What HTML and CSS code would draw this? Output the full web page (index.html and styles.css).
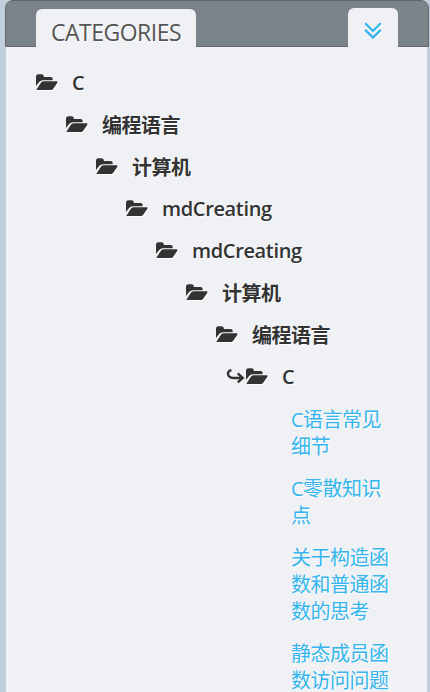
FILE: index.html
```html
<!DOCTYPE html>
<html lang="zh-CN">
<head>
<meta charset="utf-8">
<title>Categories</title>
<link rel="stylesheet" href="styles.css">
</head>
<body>
<svg class="defs" aria-hidden="true">
  <symbol id="folder" viewBox="0 0 22 17"><path d="M0 13.5V2.6C0 1.2.9.2 2.3.2H5.6C7 .2 7.9 1.2 7.9 2.6V3h6.6c1.4 0 2.2.8 2.2 2.2V6.2H7.2C5.5 6.2 4.1 6.9 3 8.2L0 12Z"/><path d="M.6 15.4 4.4 9.4C5.3 8 6.3 7.3 7.7 7.3H20.3c1.1 0 1.5.7.9 1.6L17.4 14.4c-.7 1.1-1.7 1.7-3 1.7H1.3c-.8 0-1-.2-.7-.7Z"/></symbol>
</svg>
<section class="panel">
  <header class="bar">
    <h2 class="title">CATEGORIES</h2>
    <a class="toggle"><svg width="18" height="18" viewBox="0 0 18 18"><path d="M1.2 1.3 9 9l7.8-7.7M1.2 7.9 9 15.6l7.8-7.7"/></svg></a>
  </header>
  <div class="tree">
    <div class="row"><svg class="folder"><use href="#folder"/></svg><span class="latin">C</span></div>
    <div class="level">
      <div class="row"><svg class="folder"><use href="#folder"/></svg><span class="cjk">编程语言</span></div>
      <div class="level">
        <div class="row"><svg class="folder"><use href="#folder"/></svg><span class="cjk">计算机</span></div>
        <div class="level">
          <div class="row"><svg class="folder"><use href="#folder"/></svg><span class="latin">mdCreating</span></div>
          <div class="level">
            <div class="row"><svg class="folder"><use href="#folder"/></svg><span class="latin">mdCreating</span></div>
            <div class="level">
              <div class="row"><svg class="folder"><use href="#folder"/></svg><span class="cjk">计算机</span></div>
              <div class="level">
                <div class="row"><svg class="folder"><use href="#folder"/></svg><span class="cjk">编程语言</span></div>
                <div class="level">
                  <div class="row current"><svg class="arrow" viewBox="0 0 20 16"><path d="M5.4 1C2.4 1.7 1.6 3.8 2.2 5.8 3 8.2 5.4 9 8.4 9h8M11.8 4.4 16.7 9l-4.9 4.4"/></svg><svg class="folder"><use href="#folder"/></svg><span class="latin">C</span></div>
                  <ul class="posts">
                    <li><a>C语言常见细节</a></li>
                    <li><a>C零散知识点</a></li>
                    <li><a>关于构造函数和普通函数的思考</a></li>
                    <li><a>静态成员函数访问问题</a></li>
                  </ul>
                </div>
              </div>
            </div>
          </div>
        </div>
      </div>
    </div>
  </div>
</section>
</body>
</html>
```
FILE: styles.css
```css
* { box-sizing: border-box; }
body {
  margin: 0;
  background: #c0cedb;
  color: #333;
  font: 20px/27px "Open Sans", "Noto Sans CJK SC", sans-serif;
  letter-spacing: -0.5px;
  text-shadow: 1px 1px 1px #fff;
}
.defs { display: block; width: 0; height: 0; }
.panel {
  width: 424px;
  height: 692px;
  margin-left: 5px;
}
.bar {
  display: flex;
  justify-content: space-between;
  align-items: flex-end;
  height: 47px;
  padding: 0 30px;
  background: #7b838b;
  border: 1px solid #666;
  border-radius: 8px 8px 0 0;
}
.title, .toggle {
  background: #eff1f5;
  border-radius: 6px 6px 0 0;
  margin: 0 0 -1px;
}
.title {
  width: 160px;
  height: 38px;
  padding-left: 15px;
  color: #555;
  font-size: 23px;
  font-weight: 400;
  line-height: 47px;
}
.toggle {
  display: flex;
  justify-content: center;
  width: 50px;
  height: 39px;
  padding-top: 14px;
}
.toggle svg {
  fill: none;
  stroke: #35b5ec;
  stroke-width: 2.3;
  filter: drop-shadow(1px 1px 0 #fff);
}
.tree {
  height: 645px;
  margin: 0 2px 0 1px;
  padding: 22px 30px 0;
  background: #eff1f5;
}
.row {
  display: flex;
  align-items: center;
  height: 27px;
  margin-bottom: 15px;
  font-weight: 700;
  white-space: nowrap;
}
.latin {
  font-weight: 600;
  letter-spacing: -0.35px;
}
.cjk { padding-top: 2px; }
.folder {
  flex: none;
  width: 22px;
  height: 17px;
  margin-right: 14px;
  fill: #333;
  filter: drop-shadow(1px 1px 0 #fff);
}
.level { padding-left: 30px; }
.current { margin-left: -20px; }
.arrow {
  flex: none;
  width: 20px;
  height: 16px;
  fill: none;
  stroke: #333;
  stroke-width: 2.4;
}
.posts {
  width: 147px;
  margin: 0;
  padding: 1px 0 0 45px;
  list-style: none;
  color: #35b5ec;
}
.posts li + li { margin-top: 15px; }
```
